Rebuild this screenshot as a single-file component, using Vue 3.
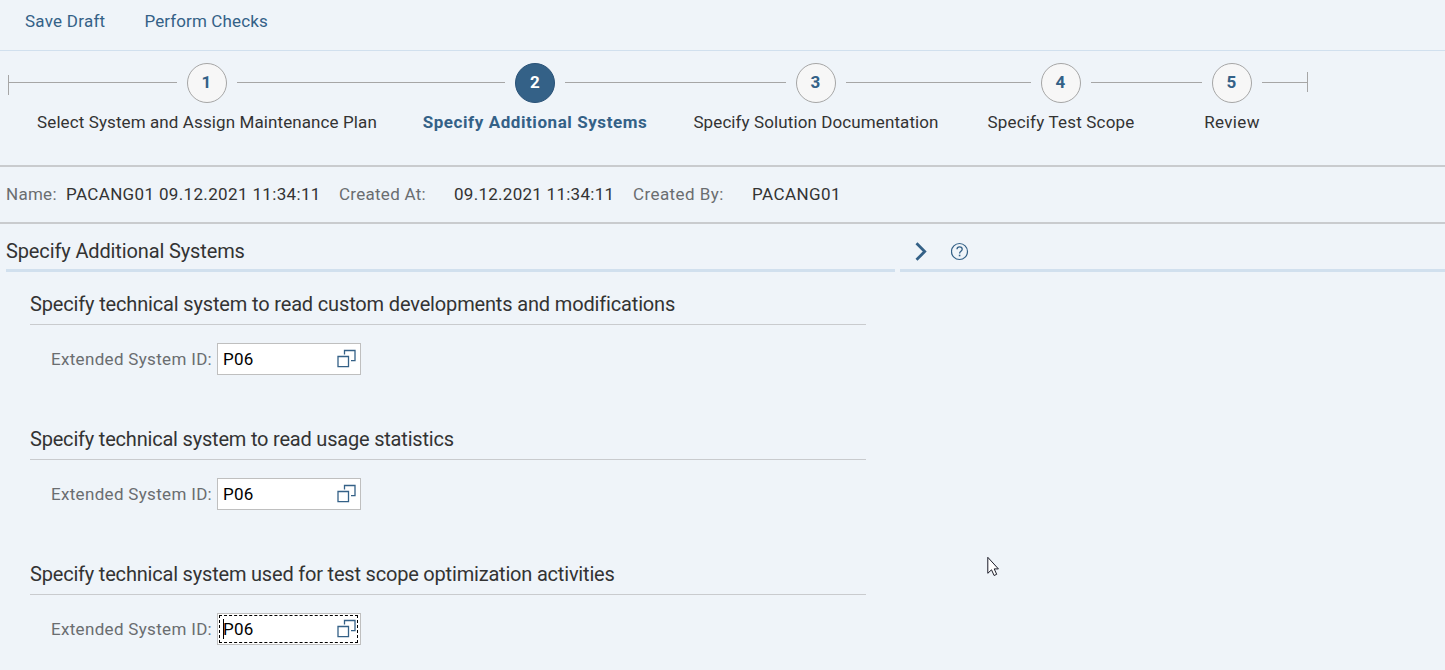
<script setup>
const steps = [
  { n: 1, label: 'Select System and Assign Maintenance Plan', cls: 's1' },
  { n: 2, label: 'Specify Additional Systems', cls: 's2', active: true },
  { n: 3, label: 'Specify Solution Documentation', cls: 's3' },
  { n: 4, label: 'Specify Test Scope', cls: 's4' },
  { n: 5, label: 'Review', cls: 's5' },
]
const sections = [
  { title: 'Specify technical system to read custom developments and modifications', cls: 'a' },
  { title: 'Specify technical system to read usage statistics', cls: 'b' },
  { title: 'Specify technical system used for test scope optimization activities', cls: 'c', focus: true },
]
</script>

<template>
  <div class="page">
    <header class="toolbar">
      <a class="action save">Save Draft</a>
      <a class="action checks">Perform Checks</a>
    </header>

    <nav class="roadmap">
      <i class="tick start"></i>
      <template v-for="s in steps" :key="s.n">
        <i class="line" :class="'before-' + s.cls"></i>
        <div class="step" :class="{ active: s.active }">
          <b class="circle">{{ s.n }}</b>
          <span class="label" :class="s.cls">{{ s.label }}</span>
        </div>
      </template>
      <i class="line last"></i>
      <i class="tick end"></i>
    </nav>

    <div class="info">
      <span class="key k1">Name:</span><span class="val v1">PACANG01 09.12.2021 11:34:11</span>
      <span class="key k2">Created At:</span><span class="val v2">09.12.2021 11:34:11</span>
      <span class="key k3">Created By:</span><span class="val v3">PACANG01</span>
    </div>

    <main class="columns">
      <div class="left">
        <h1 class="head title">Specify Additional Systems</h1>
        <section v-for="s in sections" :key="s.cls" class="section">
          <h2><span :class="s.cls">{{ s.title }}</span></h2>
          <div class="field">
            <label>Extended System ID:</label>
            <div class="input" :class="{ focus: s.focus }">
              <span class="text">P06</span>
              <svg class="help" width="20" height="20" viewBox="0 0 20 20" fill="none" stroke="#346187">
                <path d="M1 7.5h10.5v10.1H1zM7.5 5.5v-4H18v10.1h-4" stroke-width="1.3" />
              </svg>
              <i v-if="s.focus" class="caret"></i>
            </div>
          </div>
        </section>
      </div>
      <aside class="right">
        <div class="head icons">
          <svg width="12" height="20" viewBox="0 0 12 20" fill="none" stroke="#346187" stroke-width="2.8">
            <path d="M1.5 1.3 9.7 9.6l-8.2 8.2" />
          </svg>
          <svg class="question" width="18" height="19" viewBox="0 0 18 19" fill="none" stroke="#346187" stroke-width="1.2">
            <circle cx="8.5" cy="9.5" r="8" />
            <path d="M6 7.2c0-3.2 5.2-3.2 5.2 0 0 2-2.6 2-2.6 4.2" stroke-width="1.3" />
            <path d="M8.6 12.7v1.6" stroke-width="1.6" />
          </svg>
        </div>
      </aside>
    </main>

    <svg class="pointer" width="13" height="21" viewBox="0 0 13 21">
      <path d="M.8 1.3v16l3.7-3.5 2.6 5.7 2.6-1.2-2.5-5.4h4.2z" fill="#fff" stroke="#1c1c28" stroke-width="1" />
    </svg>
  </div>
</template>

<style>
body { background: #eff4f9; }
</style>

<style scoped>
.page {
  position: relative;
  height: 670px;
  overflow: hidden;
  box-sizing: border-box;
  background: #eff4f9;
  color: #333;
  font: 17px/20px Roboto, "Liberation Sans", sans-serif;
  white-space: nowrap;
}
.toolbar {
  display: flex;
  gap: 39px;
  height: 51px;
  padding: 11px 0 0 25px;
  box-sizing: border-box;
  border-bottom: 1px solid #d1e0ee;
}
.action { color: #346187; letter-spacing: .25px; }
.checks { letter-spacing: .12px; }
.roadmap {
  display: flex;
  height: 114px;
  padding: 12px 0 0 8px;
  box-sizing: border-box;
}
.line { height: 1px; margin-top: 19px; background: #a6a6a6; flex: none; }
.before-s1 { width: 168px; }
.before-s2 { width: 268px; }
.before-s3 { width: 221px; }
.before-s4 { width: 185px; }
.before-s5 { width: 111px; }
.last { width: 45px; }
.tick { width: 1px; height: 20px; background: #a6a6a6; flex: none; }
.start { margin-top: 12px; }
.end { margin-top: 9px; }
.step {
  width: 60px;
  flex: none;
  display: flex;
  flex-direction: column;
  align-items: center;
}
.circle {
  width: 40px;
  height: 40px;
  box-sizing: border-box;
  border: 1px solid #a6a6a6;
  border-radius: 50%;
  background: #f7f7f7;
  color: #346187;
  text-align: center;
  line-height: 36px;
  padding-right: 1px;
  flex: none;
}
.active .circle { background: #346187; border-color: #2a5277; color: #fff; padding: 0; }
.label { margin-top: 9px; }
.label.s1 { letter-spacing: .1px; }
.label.s2 { letter-spacing: .57px; }
.label.s3 { letter-spacing: .1px; }
.label.s4 { letter-spacing: .19px; }
.label.s5 { letter-spacing: .35px; }
.active .label { color: #346187; font-weight: 700; }
.info {
  height: 59px;
  box-sizing: border-box;
  border-top: 2px solid #c9cbce;
  border-bottom: 2px solid #c9cbce;
  display: grid;
  grid-template-columns: 60px 273px 115px 179px 119px auto;
  padding: 17px 0 0 6px;
  letter-spacing: .27px;
}
.v1 { letter-spacing: .35px; }
.k3, .v3 { letter-spacing: .42px; }
.key, label { color: #6a6d70; }
.columns { display: flex; gap: 5px; padding-left: 6px; }
.left { width: 889px; flex: none; }
.right { flex: 1; }
.head {
  height: 48px;
  box-sizing: border-box;
  border-bottom: 3px solid #d1e0ee;
  margin: 0;
  font-size: 20px;
  font-weight: 400;
  line-height: 54px;
}
.title { letter-spacing: -.13px; }
.icons { display: flex; padding: 18px 0 0 15px; gap: 24px; }
.section { height: 135px; padding-left: 24px; }
h2 {
  width: 836px;
  height: 53px;
  margin: 0;
  box-sizing: border-box;
  border-bottom: 1px solid #c9cbce;
  font-size: 20px;
  font-weight: 400;
  line-height: 64px;
}
.a { letter-spacing: -.155px; }
.b { letter-spacing: -.2px; }
.c { letter-spacing: -.195px; }
.field { display: flex; padding: 18px 0 0 21px; height: 32px; }
label { width: 166px; line-height: 32px; letter-spacing: .32px; flex: none; }
.input {
  position: relative;
  width: 144px;
  height: 32px;
  box-sizing: border-box;
  border: 1px solid #bfbfbf;
  background: #fff;
  color: #000;
  display: flex;
  justify-content: space-between;
  padding: 0 3px 0 5px;
}
.text { line-height: 30px; letter-spacing: .2px; }
.help { margin-top: 5px; }
.focus::after {
  content: "";
  position: absolute;
  inset: 1px 2px 1px 1px;
  border: 1px dashed #000;
}
.caret { position: absolute; left: 5px; top: 5px; width: 1px; height: 20px; background: #000; }
.pointer { position: absolute; left: 987px; top: 556px; }
</style>
